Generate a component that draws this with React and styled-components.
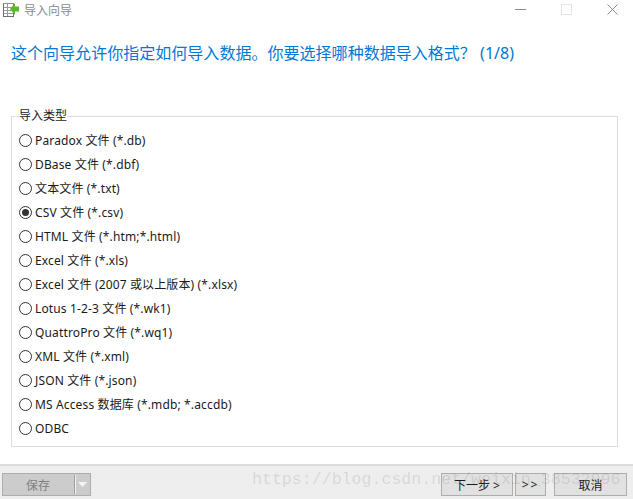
import React from "react";
import styled, { createGlobalStyle } from "styled-components";

const GlobalStyle = createGlobalStyle`
  html, body {
    margin: 0;
    padding: 0;
    background: #fff;
  }
  body {
    font-family: "Noto Sans", "Noto Sans CJK SC", sans-serif;
    font-size: 12px;
    color: #1a1a1a;
  }
`;

const Wizard = styled.div`
  position: relative;
  width: 633px;
  height: 499px;
  display: flex;
  flex-direction: column;
  overflow: hidden;
  background: #fff;
`;

const TitleBar = styled.div`
  height: 19px;
  display: flex;
  align-items: center;
  padding-left: 3px;
`;

const Title = styled.span`
  margin-left: 4px;
  font-size: 12px;
  color: #8c8c8c;
`;

const WindowControls = styled.div`
  margin-left: auto;
  padding-right: 15px;
  display: flex;
  align-items: center;
`;

const WindowButton = styled.div`
  width: 46px;
  height: 19px;
  display: flex;
  align-items: center;
  justify-content: flex-end;
`;

const Heading = styled.h1`
  margin: 0;
  padding: 23px 0 0 11px;
  height: 91px;
  box-sizing: border-box;
  font-size: 16px;
  line-height: 22px;
  font-weight: 400;
  color: #0078d7;
  letter-spacing: 0.03px;
`;

const GroupBox = styled.fieldset`
  margin: 0 15px 0 11px;
  padding: 6px 0 0 7px;
  height: 337px;
  box-sizing: border-box;
  border: 1px solid #dcdcdc;
  border-radius: 0;
  display: flex;
  flex-direction: column;
`;

const GroupLegend = styled.legend`
  padding: 0;
  margin-left: 0;
  font-size: 12px;
  line-height: 12px;
  color: #1a1a1a;
`;

const OptionRow = styled.label`
  height: 24px;
  display: flex;
  align-items: center;
  gap: 3px;
  letter-spacing: 0.14px;
`;

const RadioCircle = styled.span`
  width: 13px;
  height: 13px;
  box-sizing: border-box;
  border: 1px solid #333;
  border-radius: 50%;
  display: flex;
  align-items: center;
  justify-content: center;
  background: #fff;

  &::after {
    content: "";
    display: ${(props) => (props.$checked ? "block" : "none")};
    width: 7px;
    height: 7px;
    border-radius: 50%;
    background: #333;
  }
`;

const Footer = styled.div`
  margin-top: auto;
  height: 35px;
  box-sizing: border-box;
  border-top: 2px solid #dcdcdc;
  background: #eeeeee;
  display: flex;
  align-items: flex-start;
  padding: 7px 6px 0 2px;
`;

const SaveButton = styled.div`
  width: 89px;
  height: 23px;
  box-sizing: border-box;
  border: 1px solid #adadad;
  background: #cccccc;
  display: flex;
  align-items: stretch;
  color: #7f7f7f;
`;

const SaveLabel = styled.span`
  flex: 1;
  display: flex;
  align-items: center;
  justify-content: center;
  padding-right: 1px;
  border-right: 1px solid #9c9c9c;
  box-shadow: 1px 0 0 #f2f2f2;
  margin: 1px 0;
`;

const SaveArrow = styled.span`
  width: 15px;
  display: flex;
  align-items: center;
  justify-content: center;
`;

const FooterButton = styled.button`
  width: ${(props) => props.$width}px;
  height: 23px;
  margin-left: ${(props) => props.$gap}px;
  padding: 0;
  box-sizing: border-box;
  border: 1px solid #adadad;
  border-radius: 0;
  background: #e1e1e1;
  font: inherit;
  color: #1a1a1a;
  letter-spacing: ${(props) => props.$spacing || 0}px;
`;

const Spacer = styled.div`
  flex: 1;
`;

const Watermark = styled.div`
  position: absolute;
  left: 252px;
  top: 470px;
  font-family: "Liberation Mono", monospace;
  font-size: 16.6px;
  line-height: 20px;
  white-space: nowrap;
  color: rgba(120, 120, 120, 0.2);
  pointer-events: none;
`;

const options = [
  "Paradox 文件 (*.db)",
  "DBase 文件 (*.dbf)",
  "文本文件 (*.txt)",
  "CSV 文件 (*.csv)",
  "HTML 文件 (*.htm;*.html)",
  "Excel 文件 (*.xls)",
  "Excel 文件 (2007 或以上版本) (*.xlsx)",
  "Lotus 1-2-3 文件 (*.wk1)",
  "QuattroPro 文件 (*.wq1)",
  "XML 文件 (*.xml)",
  "JSON 文件 (*.json)",
  "MS Access 数据库 (*.mdb; *.accdb)",
  "ODBC",
];

const AppIcon = () => (
  <svg width="17" height="17" viewBox="0 0 17 17">
    <rect x="0.5" y="2.5" width="10" height="13" fill="#fff" stroke="#6d6d6d" />
    <path d="M1 6.5h9M1 9.5h9M1 12.5h9M4.5 3v12" stroke="#9a9a9a" fill="none" />
    <path d="M0 2.5h11" stroke="#5b9bd5" fill="none" />
    <path d="M7 8 12 2V5.5H16V10.5H12V14Z" fill="#5cb82a" />
  </svg>
);

export default function App() {
  return (
    <Wizard>
      <GlobalStyle />
      <TitleBar>
        <AppIcon />
        <Title>导入向导</Title>
        <WindowControls>
          <WindowButton>
            <svg width="11" height="11" viewBox="0 0 11 11">
              <path d="M0 5.5h11" stroke="#8c8c8c" />
            </svg>
          </WindowButton>
          <WindowButton>
            <svg width="11" height="11" viewBox="0 0 11 11">
              <rect x="0.5" y="0.5" width="10" height="10" fill="none" stroke="#e3e3e3" />
            </svg>
          </WindowButton>
          <WindowButton>
            <svg width="11" height="11" viewBox="0 0 11 11">
              <path d="M0.5 0.5l10 10M10.5 0.5l-10 10" stroke="#8c8c8c" />
            </svg>
          </WindowButton>
        </WindowControls>
      </TitleBar>
      <Heading>这个向导允许你指定如何导入数据。你要选择哪种数据导入格式？ (1/8)</Heading>
      <GroupBox>
        <GroupLegend>导入类型</GroupLegend>
        {options.map((option) => (
          <OptionRow key={option}>
            <RadioCircle $checked={option.startsWith("CSV")} />
            {option}
          </OptionRow>
        ))}
      </GroupBox>
      <Footer>
        <SaveButton>
          <SaveLabel>保存</SaveLabel>
          <SaveArrow>
            <svg width="9" height="5" viewBox="0 0 9 5">
              <path d="M0 0h9L4.5 5Z" fill="#f4f4f4" />
            </svg>
          </SaveArrow>
        </SaveButton>
        <Spacer />
        <FooterButton $width={72} $gap={0}>下一步 &gt;</FooterButton>
        <FooterButton $width={31} $gap={2} $spacing={2}>&gt;&gt;</FooterButton>
        <FooterButton $width={73} $gap={8}>取消</FooterButton>
      </Footer>
      <Watermark>https://blog.csdn.net/weixin_38532996</Watermark>
    </Wizard>
  );
}
